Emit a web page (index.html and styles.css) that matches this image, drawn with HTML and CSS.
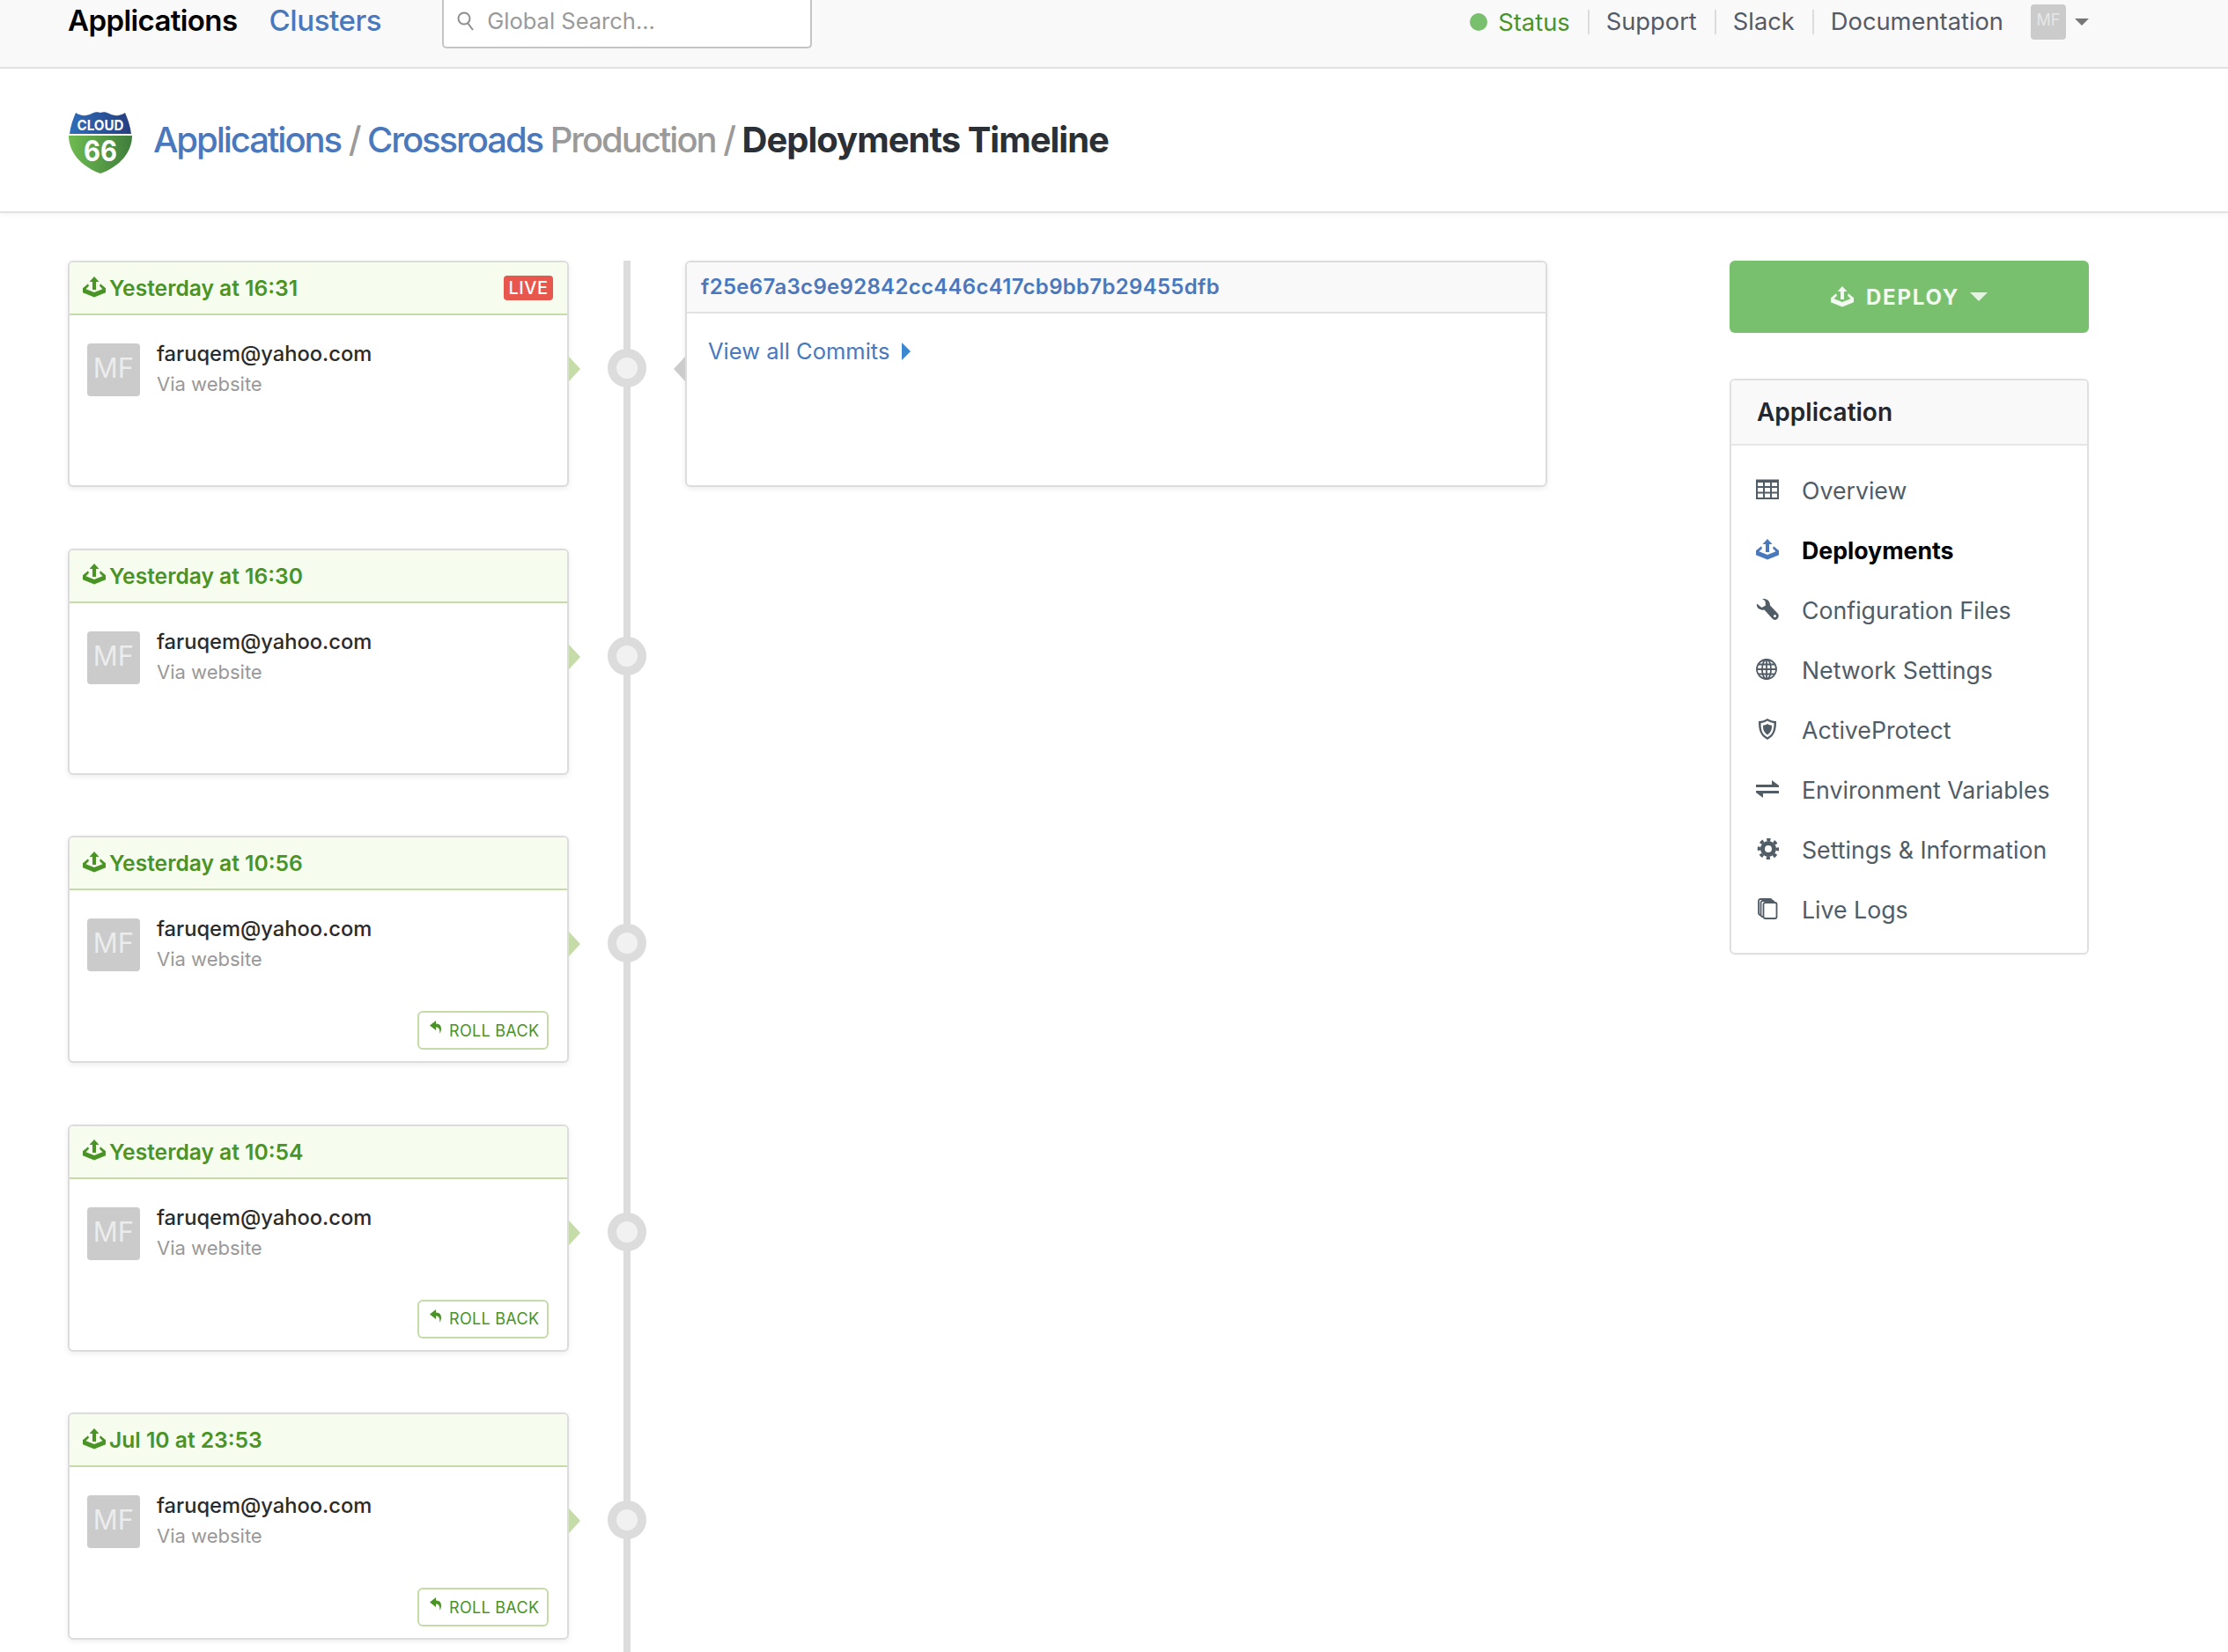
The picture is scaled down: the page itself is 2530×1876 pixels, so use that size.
FILE: index.html
```html
<!DOCTYPE html>
<html>
<head>
	<title>Deployments Timeline</title>
	<link rel="stylesheet" href="styles.css">
</head>
<body>
	<svg class="defs" width="0" height="0">
		<symbol id="deploy" viewBox="0 0 26 24">
			<path d="M13 0L18.500 6H15V15H11V6H7.500Z"/>
			<path d="M6 8.300L0 13.300V18.300L13 23.500L26 18.300V13.300L20 8.300L19 10.700L22.500 14.300L13 18L3.500 14.300L7 10.700Z"/>
		</symbol>
	</svg>

	<div class="topnav">
		<a class="nav-main">Applications</a>
		<a class="nav-link">Clusters</a>
		<div class="search">
			<svg class="search-icon" viewBox="0 0 20 22" width="20" height="22"><circle cx="8" cy="8" r="6.500"/><path d="M12 13L18 21"/></svg>
			<span>Global Search...</span>
		</div>
		<div class="nav-right">
			<span class="status-dot"></span>
			<a class="status">Status</a>
			<a class="sep">Support</a>
			<a class="sep">Slack</a>
			<a class="sep">Documentation</a>
			<div class="nav-avatar">MF</div>
			<span class="nav-caret"></span>
		</div>
	</div>

	<div class="pagehead">
		<svg class="logo" viewBox="0 0 72 70" width="72" height="70">
			<defs>
				<linearGradient id="blue" x1="0" x2="1"><stop offset="0" stop-color="#2f6cb8"/><stop offset="1" stop-color="#253f80"/></linearGradient>
				<linearGradient id="green" x1="0" x2="1"><stop offset="0" stop-color="#6fbb50"/><stop offset="1" stop-color="#3f7d3c"/></linearGradient>
			</defs>
			<path fill="url(#blue)" d="M8 1C14 5 20 5 26 2C30 0 33 0 36 1C39 0 42 0 46 2C52 5 58 5 64 1C67 8 70 16 71 25H1C2 16 5 8 8 1Z"/>
			<path fill="url(#green)" d="M0 27H72C72 46 58 62 36 70C14 62 0 46 0 27Z"/>
			<text class="logo-cloud" x="36" y="21" text-anchor="middle" textLength="53" lengthAdjust="spacingAndGlyphs">CLOUD</text>
			<text class="logo-num" x="36" y="56" text-anchor="middle" textLength="38" lengthAdjust="spacingAndGlyphs">66</text>
		</svg>
		<h1>
			<a>Applications</a> <span class="slash">/</span> <a>Crossroads</a> <span class="env">Production</span> <span class="slash">/</span> <b>Deployments Timeline</b>
		</h1>
	</div>

	<div class="content">
		<div class="timeline">
			<div class="row">
				<div class="card">
					<div class="card-head">
						<svg class="head-icon"><use href="#deploy"/></svg>
						<span class="when">Yesterday at 16:31</span>
						<span class="live">LIVE</span>
					</div>
					<div class="card-body">
						<div class="who">
							<div class="avatar">MF</div>
							<div>
								<div class="email">faruqem@yahoo.com</div>
								<div class="via">Via website</div>
							</div>
						</div>
					</div>
				</div>
				<div class="node"></div>
				<div class="detail">
					<div class="detail-head">f25e67a3c9e92842cc446c417cb9bb7b29455dfb</div>
					<div class="detail-body"><a>View all Commits</a><span class="more"></span></div>
				</div>
			</div>

			<div class="row">
				<div class="card">
					<div class="card-head">
						<svg class="head-icon"><use href="#deploy"/></svg>
						<span class="when">Yesterday at 16:30</span>
					</div>
					<div class="card-body">
						<div class="who">
							<div class="avatar">MF</div>
							<div>
								<div class="email">faruqem@yahoo.com</div>
								<div class="via">Via website</div>
							</div>
						</div>
					</div>
				</div>
				<div class="node"></div>
			</div>

			<div class="row">
				<div class="card">
					<div class="card-head">
						<svg class="head-icon"><use href="#deploy"/></svg>
						<span class="when">Yesterday at 10:56</span>
					</div>
					<div class="card-body">
						<div class="who">
							<div class="avatar">MF</div>
							<div>
								<div class="email">faruqem@yahoo.com</div>
								<div class="via">Via website</div>
							</div>
						</div>
						<div class="actions">
							<a class="rollback"><svg viewBox="0 0 14 16" width="14" height="16"><path d="M7 0L0 5.500L7 11V7.500C10 7.500 11.500 9 11.500 15C14 10 14 3.500 7 3.500Z"/></svg>ROLL BACK</a>
						</div>
					</div>
				</div>
				<div class="node"></div>
			</div>

			<div class="row">
				<div class="card">
					<div class="card-head">
						<svg class="head-icon"><use href="#deploy"/></svg>
						<span class="when">Yesterday at 10:54</span>
					</div>
					<div class="card-body">
						<div class="who">
							<div class="avatar">MF</div>
							<div>
								<div class="email">faruqem@yahoo.com</div>
								<div class="via">Via website</div>
							</div>
						</div>
						<div class="actions">
							<a class="rollback"><svg viewBox="0 0 14 16" width="14" height="16"><path d="M7 0L0 5.500L7 11V7.500C10 7.500 11.500 9 11.500 15C14 10 14 3.500 7 3.500Z"/></svg>ROLL BACK</a>
						</div>
					</div>
				</div>
				<div class="node"></div>
			</div>

			<div class="row">
				<div class="card">
					<div class="card-head">
						<svg class="head-icon"><use href="#deploy"/></svg>
						<span class="when">Jul 10 at 23:53</span>
					</div>
					<div class="card-body">
						<div class="who">
							<div class="avatar">MF</div>
							<div>
								<div class="email">faruqem@yahoo.com</div>
								<div class="via">Via website</div>
							</div>
						</div>
						<div class="actions">
							<a class="rollback"><svg viewBox="0 0 14 16" width="14" height="16"><path d="M7 0L0 5.500L7 11V7.500C10 7.500 11.500 9 11.500 15C14 10 14 3.500 7 3.500Z"/></svg>ROLL BACK</a>
						</div>
					</div>
				</div>
				<div class="node"></div>
			</div>
		</div>

		<div class="sidebar">
			<a class="deploy-btn">
				<svg class="btn-icon"><use href="#deploy"/></svg>
				<span>DEPLOY</span>
				<span class="btn-caret"></span>
			</a>
			<div class="panel">
				<div class="panel-head">Application</div>
				<ul class="menu">
					<li>
						<svg viewBox="0 0 26 24"><path class="line" d="M1 2H25V22H1ZM1 9H25M1 15.500H25M9 2V22M17 2V22"/><path d="M0 0.500H26V4H0Z"/></svg>
						Overview
					</li>
					<li class="active">
						<svg viewBox="0 0 26 24"><use href="#deploy"/></svg>
						Deployments
					</li>
					<li>
						<svg viewBox="0 0 26 24"><path d="M1 5.500L6.500 10L11 7.500L10.500 2.500L7 0C12-.5 16 2 16 7.500L25 17C26.500 19 25.500 22 24 23C22 24.500 20 24 18.500 22.500L9.500 12.500C4 13.500 0 10 1 5.500Z"/><circle cx="21.500" cy="19.500" r="1.500" fill="#fff"/></svg>
						Configuration Files
					</li>
					<li>
						<svg viewBox="0 0 26 24"><g class="line thin"><circle cx="12" cy="12" r="11"/><ellipse cx="12" cy="12" rx="5" ry="11"/><path d="M12 1V23M1 12H23M2.500 6.500H21.500M2.500 17.500H21.500"/></g></svg>
						Network Settings
					</li>
					<li>
						<svg viewBox="0 0 26 24"><path fill-rule="evenodd" d="M13 0C16 2 19 3 23 3C23 12 22 19 13 24C4 19 3 12 3 3C7 3 10 2 13 0ZM13 2.500C10.500 4 8.500 4.800 5.500 5.200C5.500 12 6.500 17.500 13 21.300C19.500 17.500 20.500 12 20.500 5.200C17.500 4.800 15.500 4 13 2.500Z"/><path d="M13 6C14.500 7 16 7.500 18 7.800C18 12 17.500 15.500 13 18.500C8.500 15.500 8 12 8 7.800C10 7.500 11.500 7 13 6Z"/></svg>
						ActiveProtect
					</li>
					<li>
						<svg viewBox="0 0 26 24"><path d="M0 7H18V2L26 8V10H0Z"/><path d="M26 14H0V16L8 22V17H26Z"/></svg>
						Environment Variables
					</li>
					<li>
						<svg viewBox="0 0 26 24"><circle class="line gear-body" cx="14" cy="12" r="6.500"/><circle class="line gear-teeth" cx="14" cy="12" r="10.500"/></svg>
						Settings &amp; Information
					</li>
					<li>
						<svg viewBox="0 0 26 24"><g class="pages"><rect x="3" y="1" width="15" height="18" rx="2"/><rect x="5.500" y="3" width="15" height="18" rx="2"/><rect x="8.500" y="5" width="15" height="18" rx="2"/></g></svg>
						Live Logs
					</li>
				</ul>
			</div>
		</div>
	</div>
</body>
</html>
```

FILE: styles.css
```css
*{
	margin: 0;
	padding: 0;
	box-sizing: border-box;
	list-style: none;
}
html,body{
	height: 1876px;
	overflow: hidden;
}
body{
	background: #fff;
	color: #2b2f36;
	font-family: Inter, "Liberation Sans", sans-serif;
	font-size: 26px;
}
.defs{
	position: absolute;
}

/* top bar */
.topnav{
	height: 78px;
	background: #f9f9f9;
	border-bottom: 2px solid #e2e2e2;
	display: flex;
	align-items: flex-start;
	padding: 0 158px 0 77px;
}
.nav-main{
	font-size: 33px;
	font-weight: 600;
	color: #000;
	letter-spacing: -0.6px;
	line-height: 46px;
}
.nav-link{
	font-size: 33px;
	font-weight: 500;
	color: #4a78bd;
	margin-left: 36px;
	letter-spacing: -0.4px;
	line-height: 46px;
}
.search{
	width: 420px;
	height: 55px;
	margin-left: 69px;
	background: #fff;
	border: 2px solid #c4c4c4;
	border-top: none;
	border-radius: 0 0 5px 5px;
	display: flex;
	align-items: center;
	padding: 0 0 6px 15px;
	font-size: 25.500px;
	color: #9a9a9a;
}
.search-icon{
	fill: none;
	stroke: #8d8d8d;
	stroke-width: 2;
	margin-right: 14px;
}
.nav-right{
	margin-left: auto;
	display: flex;
	align-items: center;
	height: 50px;
	font-size: 27.300px;
	color: #545b67;
}
.status-dot{
	width: 20px;
	height: 20px;
	border-radius: 50%;
	background: #79c06e;
	margin-right: 12px;
}
.status{
	color: #4a9325;
	padding-right: 20px;
}
.sep{
	border-left: 2px solid #dcdcdc;
	padding: 0 20px 0 19px;
	line-height: 28px;
}
.nav-avatar{
	width: 40px;
	height: 40px;
	margin-left: 11px;
	border-radius: 4px;
	background: #cbcbcb;
	color: #e6e6e6;
	font-size: 18px;
	text-align: center;
	line-height: 36px;
}
.nav-caret{
	width: 0;
	height: 0;
	margin-left: 10px;
	border-left: 8px solid transparent;
	border-right: 8px solid transparent;
	border-top: 8px solid #777;
}

/* page title */
.pagehead{
	height: 164px;
	border-bottom: 2px solid #e2e2e2;
	box-shadow: 0 3px 6px rgba(0,0,0,0.03);
	display: flex;
	align-items: center;
	padding-left: 78px;
}
.logo{
	margin-right: 24px;
	margin-top: 6px;
}
.logo-cloud{
	font-size: 16.500px;
	font-weight: 700;
	fill: #fff;
}
.logo-num{
	font-size: 32px;
	font-weight: 700;
	fill: #fff;
}
h1{
	font-size: 40px;
	font-weight: 500;
	letter-spacing: -2.050px;
	color: #9a9a9a;
	margin-top: -2px;
}
h1 a{
	color: #4a78bd;
}
h1 b{
	font-weight: 700;
	letter-spacing: -1px;
	color: #2b2f36;
}

/* timeline */
.content{
	display: flex;
	padding: 54px 158px 0 77px;
	height: 1634px;
}
.timeline{
	position: relative;
	width: 1680px;
	display: flex;
	flex-direction: column;
	gap: 69.500px;
}
.timeline::before{
	content: "";
	position: absolute;
	left: 631px;
	top: 0;
	bottom: 0;
	width: 8px;
	background: #dcdcdc;
}
.row{
	display: flex;
	align-items: flex-start;
}
.card{
	position: relative;
	width: 569px;
	min-height: 257px;
	background: #fff;
	border: 2px solid #dcdcdc;
	border-radius: 6px;
	box-shadow: 0 2px 6px rgba(0,0,0,0.08);
}
.card::after{
	content: "";
	position: absolute;
	right: -15px;
	top: 107px;
	border-left: 13px solid #c5dba8;
	border-top: 14px solid transparent;
	border-bottom: 14px solid transparent;
}
.card-head{
	height: 60px;
	background: #f6fdef;
	border-bottom: 2px solid #c5dba8;
	border-radius: 4px 4px 0 0;
	display: flex;
	align-items: center;
	padding: 0 15px;
}
.head-icon{
	width: 26px;
	height: 24px;
	fill: #4a9325;
	margin: -3px 4px 0 0;
}
.when{
	font-size: 24.600px;
	font-weight: 600;
	color: #4a9325;
}
.live{
	margin-left: auto;
	background: #e8574e;
	color: #fff;
	font-size: 20px;
	font-weight: 500;
	letter-spacing: 0.5px;
	line-height: 28px;
	width: 56px;
	text-align: center;
	border-radius: 4px;
	margin-right: 1px;
}
.card-body{
	padding: 32px 20px 13px;
}
.who{
	display: flex;
}
.avatar{
	width: 60px;
	height: 60px;
	border-radius: 4px;
	background: #cbcbcb;
	color: #ececec;
	font-size: 31px;
	line-height: 56px;
	text-align: center;
	margin-right: 19px;
}
.email{
	font-size: 23.700px;
	line-height: 28px;
	margin-top: -2px;
	font-weight: 500;
	color: #2b2b2b;
}
.via{
	font-size: 22px;
	line-height: 28px;
	margin-top: 6px;
	color: #999;
}
.actions{
	display: flex;
	justify-content: flex-end;
	margin-top: 45px;
}
.rollback{
	display: flex;
	align-items: center;
	height: 44px;
	width: 149px;
	margin-right: 1px;
	padding-left: 12px;
	border: 2px solid #c5dba8;
	border-radius: 6px;
	color: #4a9325;
	font-size: 18px;
	letter-spacing: 0.3px;
}
.rollback svg{
	fill: #4a9325;
	margin: -6px 8px 0 0;
}
.node{
	position: relative;
	width: 44px;
	height: 44px;
	margin: 100px 44px 0 44px;
	border-radius: 50%;
	background: #f1f1f1;
	border: 10px solid #dcdcdc;
}
.detail{
	position: relative;
	width: 979px;
	height: 257px;
	border: 2px solid #dcdcdc;
	border-radius: 6px;
	box-shadow: 0 2px 6px rgba(0,0,0,0.08);
}
.detail::before{
	content: "";
	position: absolute;
	left: -15px;
	top: 107px;
	border-right: 13px solid #ccc;
	border-top: 14px solid transparent;
	border-bottom: 14px solid transparent;
}
.detail-head{
	height: 58px;
	background: #f9f9f9;
	border-bottom: 2px solid #e2e2e2;
	border-radius: 4px 4px 0 0;
	padding-left: 16px;
	line-height: 55px;
	font-size: 24px;
	font-weight: 600;
	letter-spacing: 0.3px;
	color: #4a78bd;
}
.detail-body{
	display: flex;
	align-items: center;
	padding: 27px 0 0 24px;
	font-size: 25.500px;
	color: #4a78bd;
}
.more{
	margin-left: 14px;
	border-left: 10px solid #3b87d0;
	border-top: 10px solid transparent;
	border-bottom: 10px solid transparent;
}

/* right column */
.sidebar{
	width: 408px;
	margin-left: 207px;
}
.deploy-btn{
	display: flex;
	align-items: center;
	justify-content: center;
	height: 82px;
	background: #79c06e;
	border-radius: 6px;
	color: #f2f9f0;
	font-size: 24px;
	font-weight: 700;
	letter-spacing: 1.8px;
}
.btn-icon{
	width: 26px;
	height: 24px;
	fill: #f2f9f0;
	margin-right: 14px;
}
.btn-caret{
	margin-left: 12px;
	border-left: 10px solid transparent;
	border-right: 10px solid transparent;
	border-top: 10px solid #e5f3e2;
}
.panel{
	margin-top: 52px;
	border: 2px solid #e0e0e0;
	border-radius: 6px;
	box-shadow: 0 1px 3px rgba(0,0,0,0.04);
}
.panel-head{
	height: 74px;
	background: #f9f9f9;
	border-bottom: 2px solid #e6e6e6;
	border-radius: 4px 4px 0 0;
	padding-left: 29px;
	line-height: 72px;
	font-size: 28px;
	font-weight: 600;
	color: #23272e;
}
.menu{
	padding: 17px 0 15px 28px;
}
.menu li{
	height: 68px;
	display: flex;
	align-items: center;
	font-size: 26.700px;
	color: #505c66;
}
.menu svg{
	width: 26px;
	height: 24px;
	margin: -2px 26px 0 0;
	fill: #505c66;
}
.line{
	fill: none;
	stroke: #505c66;
	stroke-width: 2;
}
.thin{
	stroke-width: 1.800;
}
.gear-body{
	stroke-width: 5;
}
.gear-teeth{
	stroke-width: 3.500;
	stroke-dasharray: 4.200 4.050;
	stroke-dashoffset: 2.100;
}
.pages rect{
	fill: #fff;
	stroke: #505c66;
	stroke-width: 1.800;
}
.menu li.active{
	color: #000;
	font-weight: 700;
}
.menu li.active svg{
	fill: #4a78bd;
}
```
